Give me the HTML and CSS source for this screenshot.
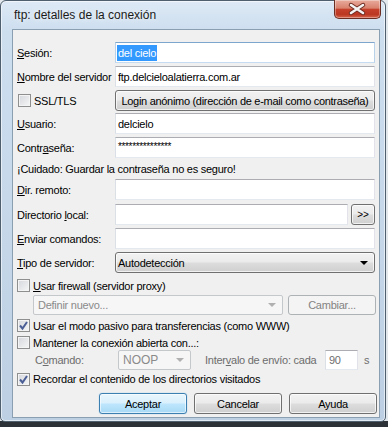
FILE: index.html
```html
<!DOCTYPE html>
<html lang="es">
<head>
  <meta charset="UTF-8" />
  <title>ftp: detalles de la conexión</title>
  <link rel="stylesheet" href="styles.css">
</head>
<body>
  <div class="window">
    <div class="titlebar">
      <span class="title">ftp: detalles de la conexión</span>
      <span class="close">
        <svg width="45" height="17" viewBox="0 0 45 17">
          <path d="M16 5 L28 13 M28 5 L16 13" stroke="#6e2b20" stroke-width="4.5" stroke-linecap="round" fill="none"/>
          <path d="M16 5 L28 13 M28 5 L16 13" stroke="#f4f4f4" stroke-width="2.6" stroke-linecap="round" fill="none"/>
        </svg>
      </span>
    </div>

    <div class="client">
      <div class="row">
        <label class="lbl"><u>S</u>esión:</label>
        <div class="field focus"><span class="sel">del cielo</span></div>
      </div>
      <div class="row">
        <label class="lbl"><u>N</u>ombre del servidor</label>
        <div class="field">ftp.delcieloalatierra.com.ar</div>
      </div>
      <div class="row">
        <label class="lbl check"><span class="chk"></span>SSL/TLS</label>
        <div class="btn wide">Login anónimo (dirección de e-mail como contraseña)</div>
      </div>
      <div class="row tight">
        <label class="lbl"><u>U</u>suario:</label>
        <div class="field">delcielo</div>
      </div>
      <div class="row">
        <label class="lbl">Contr<u>a</u>seña:</label>
        <div class="field pass">***************</div>
      </div>

      <div class="note">¡Cuidado: Guardar la contraseña no es seguro!</div>

      <div class="row tight">
        <label class="lbl"><u>D</u>ir. remoto:</label>
        <div class="field"></div>
      </div>
      <div class="row loose">
        <label class="lbl">Directorio <u>l</u>ocal:</label>
        <div class="field"></div>
        <div class="btn mini">&gt;&gt;</div>
      </div>
      <div class="row">
        <label class="lbl"><u>E</u>nviar comandos:</label>
        <div class="field"></div>
      </div>
      <div class="row">
        <label class="lbl"><u>T</u>ipo de servidor:</label>
        <div class="combo">Autodetección<span class="arrow"></span></div>
      </div>

      <div class="check-row firewall">
        <span class="chk"></span><span><u>U</u>sar firewall (servidor proxy)</span>
      </div>
      <div class="proxy-row">
        <div class="combo disabled">Definir nuevo...<span class="arrow"></span></div>
        <div class="btn disabled">Cambiar...</div>
      </div>
      <div class="check-row pasivo">
        <span class="chk on">
          <svg width="11" height="11" viewBox="0 0 11 11"><path d="M2 5.5 L4.5 8.5 L9 2" stroke="#4b5f96" stroke-width="2" fill="none"/></svg>
        </span>
        <span>Usar el modo pasivo para transferencias (como WWW)</span>
      </div>
      <div class="check-row mantener">
        <span class="chk"></span><span>Mantener la conexión abierta con...:</span>
      </div>
      <div class="keep-row">
        <span class="sub-lbl">C<u>o</u>mando:</span>
        <div class="combo disabled noop">NOOP<span class="arrow"></span></div>
        <span class="interval">Inter<u>v</u>alo de envío: cada</span>
        <div class="field small">90</div>
        <span class="unit">s</span>
      </div>
      <div class="check-row recordar">
        <span class="chk on">
          <svg width="11" height="11" viewBox="0 0 11 11"><path d="M2 5.5 L4.5 8.5 L9 2" stroke="#4b5f96" stroke-width="2" fill="none"/></svg>
        </span>
        <span>Recordar el contenido de los directorios visitados</span>
      </div>

      <div class="buttons">
        <div class="btn default">Aceptar</div>
        <div class="btn">Cancelar</div>
        <div class="btn">Ayuda</div>
      </div>
    </div>
  </div>
</body>
</html>
```

FILE: styles.css
```css
* {
  box-sizing: border-box;
}

body {
  margin: 0;
  width: 388px;
  height: 427px;
  overflow: hidden;
  font-family: 'Liberation Sans', Arial, sans-serif;
  font-size: 11px;
  letter-spacing: -0.25px;
  color: #000;
  background: linear-gradient(#e3e8ed 0, #e3e8ed 421px, #2b3137 421px);
}

.window {
  width: 386px;
  height: 422px;
  padding: 0 5px 3px 11px;
  border: 1px solid #4f5f6e;
  border-radius: 6px 6px 5px 5px;
  background: linear-gradient(#dde9f5, #cddeef 30px, #bdd0e3);
  box-shadow: inset 0 0 0 1px rgba(255, 255, 255, 0.55);
  display: flex;
  flex-direction: column;
}

.titlebar {
  height: 28px;
  display: flex;
  justify-content: space-between;
  align-items: flex-start;
}

.title {
  padding: 6px 0 0 2px;
  font-size: 12px;
  letter-spacing: 0;
  line-height: 16px;
  color: #1a1a1a;
  text-shadow: 0 0 6px #fff;
}

.close {
  width: 47px;
  height: 19px;
  margin: -1px -1px 0 0;
  border: 1px solid #6b2c22;
  border-top: none;
  border-radius: 0 0 5px 5px;
  background: linear-gradient(#e8ab9c, #d9826f 45%, #c5412b 52%, #bb3722 80%, #d4654a);
  box-shadow: inset 0 0 0 1px rgba(255, 255, 255, 0.35);
}

.close svg {
  display: block;
}

.client {
  flex: 1;
  background: #f0f0f0;
  border: 1px solid #8b9fb3;
  padding: 12px 4px 0 4px;
  display: flex;
  flex-direction: column;
}

.row {
  display: flex;
  align-items: center;
  height: 21px;
  margin-top: 3px;
}

.row:first-child {
  margin-top: 0;
}

.row.tight {
  margin-top: 2px;
}

.row.loose {
  margin-top: 4px;
}

.lbl {
  width: 98px;
  flex: none;
}

.lbl.check {
  display: flex;
  align-items: center;
  gap: 3px;
  padding-left: 1px;
}

.field {
  flex: 1;
  height: 21px;
  padding: 0 2px;
  background: #fff;
  border: 1px solid;
  border-color: #abadb3 #e2e3ea #e3e9ef #dbdfe6;
  display: flex;
  align-items: center;
  white-space: nowrap;
}

.field.focus {
  border-color: #7ea6cc #b9d2ea #c5dbef #b9d2ea;
  padding-left: 1px;
}

.sel {
  background: #3399ff;
  color: #fff;
  line-height: 16px;
  padding: 0 1px;
}

.field.pass {
  font-size: 10px;
  letter-spacing: -0.35px;
  align-items: flex-start;
  padding-top: 3px;
}

.field.small {
  flex: none;
  width: 33px;
  height: 20px;
  margin-left: 3px;
  padding-left: 3px;
  color: #6d6d6d;
}

.btn {
  height: 21px;
  border: 1px solid #707070;
  border-radius: 3px;
  background: linear-gradient(#f2f2f2, #ebebeb 48%, #dddddd 52%, #cfcfcf);
  box-shadow: inset 0 0 0 1px rgba(255, 255, 255, 0.7);
  display: flex;
  align-items: center;
  justify-content: center;
  white-space: nowrap;
}

.btn.wide {
  flex: 1;
  letter-spacing: -0.3px;
}

.btn.mini {
  width: 24px;
  margin-left: 3px;
  font-size: 10px;
  letter-spacing: 0;
}

.btn.default {
  border-color: #3c7fb1;
  background: linear-gradient(#eaf6fd, #d9f0fc 48%, #bee6fd 52%, #a7d9f5);
  box-shadow: inset 0 0 0 1px rgba(255, 255, 255, 0.6), 0 0 1px #6fb6e8;
}

.btn.disabled {
  border-color: #adb2b5;
  background: #f4f4f4;
  box-shadow: none;
  color: #838383;
}

.combo {
  flex: 1;
  height: 21px;
  padding: 0 6px 0 2px;
  border: 1px solid #707070;
  border-radius: 3px;
  background: linear-gradient(#f2f2f2, #ebebeb 48%, #dddddd 52%, #cfcfcf);
  box-shadow: inset 0 0 0 1px rgba(255, 255, 255, 0.7);
  display: flex;
  align-items: center;
}

.arrow {
  margin-left: auto;
  width: 0;
  height: 0;
  border-left: 4px solid transparent;
  border-right: 4px solid transparent;
  border-top: 4px solid #000;
}

.combo.disabled {
  border-color: #c4c8cb;
  border-radius: 2px;
  background: #f6f6f6;
  box-shadow: none;
  color: #8a8a8a;
  padding-left: 4px;
}

.combo.disabled .arrow {
  border-top-color: #b0b0b0;
}

.note {
  height: 16px;
  margin-top: 3px;
  line-height: 16px;
}

.chk {
  width: 13px;
  height: 13px;
  flex: none;
  border: 1px solid #8e8f8f;
  background: linear-gradient(135deg, #d4d7dc, #f6f6f6);
  box-shadow: inset 0 0 0 1px #f4f4f4;
  display: flex;
  align-items: center;
  justify-content: center;
}

.check-row {
  display: flex;
  align-items: center;
  gap: 3px;
}

.firewall {
  height: 19px;
  margin-top: 3px;
}

.proxy-row {
  display: flex;
  height: 20px;
  padding-left: 16px;
  margin-right: -2px;
  gap: 5px;
}

.proxy-row .combo {
  flex: none;
  width: 250px;
  height: 20px;
}

.proxy-row .btn {
  width: 88px;
  height: 20px;
}

.pasivo {
  height: 17px;
  margin-top: 2px;
}

.mantener {
  height: 15px;
  margin-top: 1px;
}

.keep-row {
  display: flex;
  align-items: center;
  height: 20px;
  padding-left: 18px;
  color: #6d6d6d;
}

.sub-lbl {
  width: 83px;
  flex: none;
}

.combo.noop {
  flex: none;
  width: 73px;
  height: 20px;
  font-size: 12px;
  letter-spacing: 0;
}

.interval {
  width: 117px;
  margin-left: 14px;
  flex: none;
  white-space: nowrap;
}

.unit {
  margin-left: 6px;
}

.recordar {
  height: 16px;
  margin-top: 1px;
}

.buttons {
  display: flex;
  justify-content: flex-end;
  gap: 7px;
  margin: 6px -2px 0 0;
}

.buttons .btn {
  width: 88px;
}
```
